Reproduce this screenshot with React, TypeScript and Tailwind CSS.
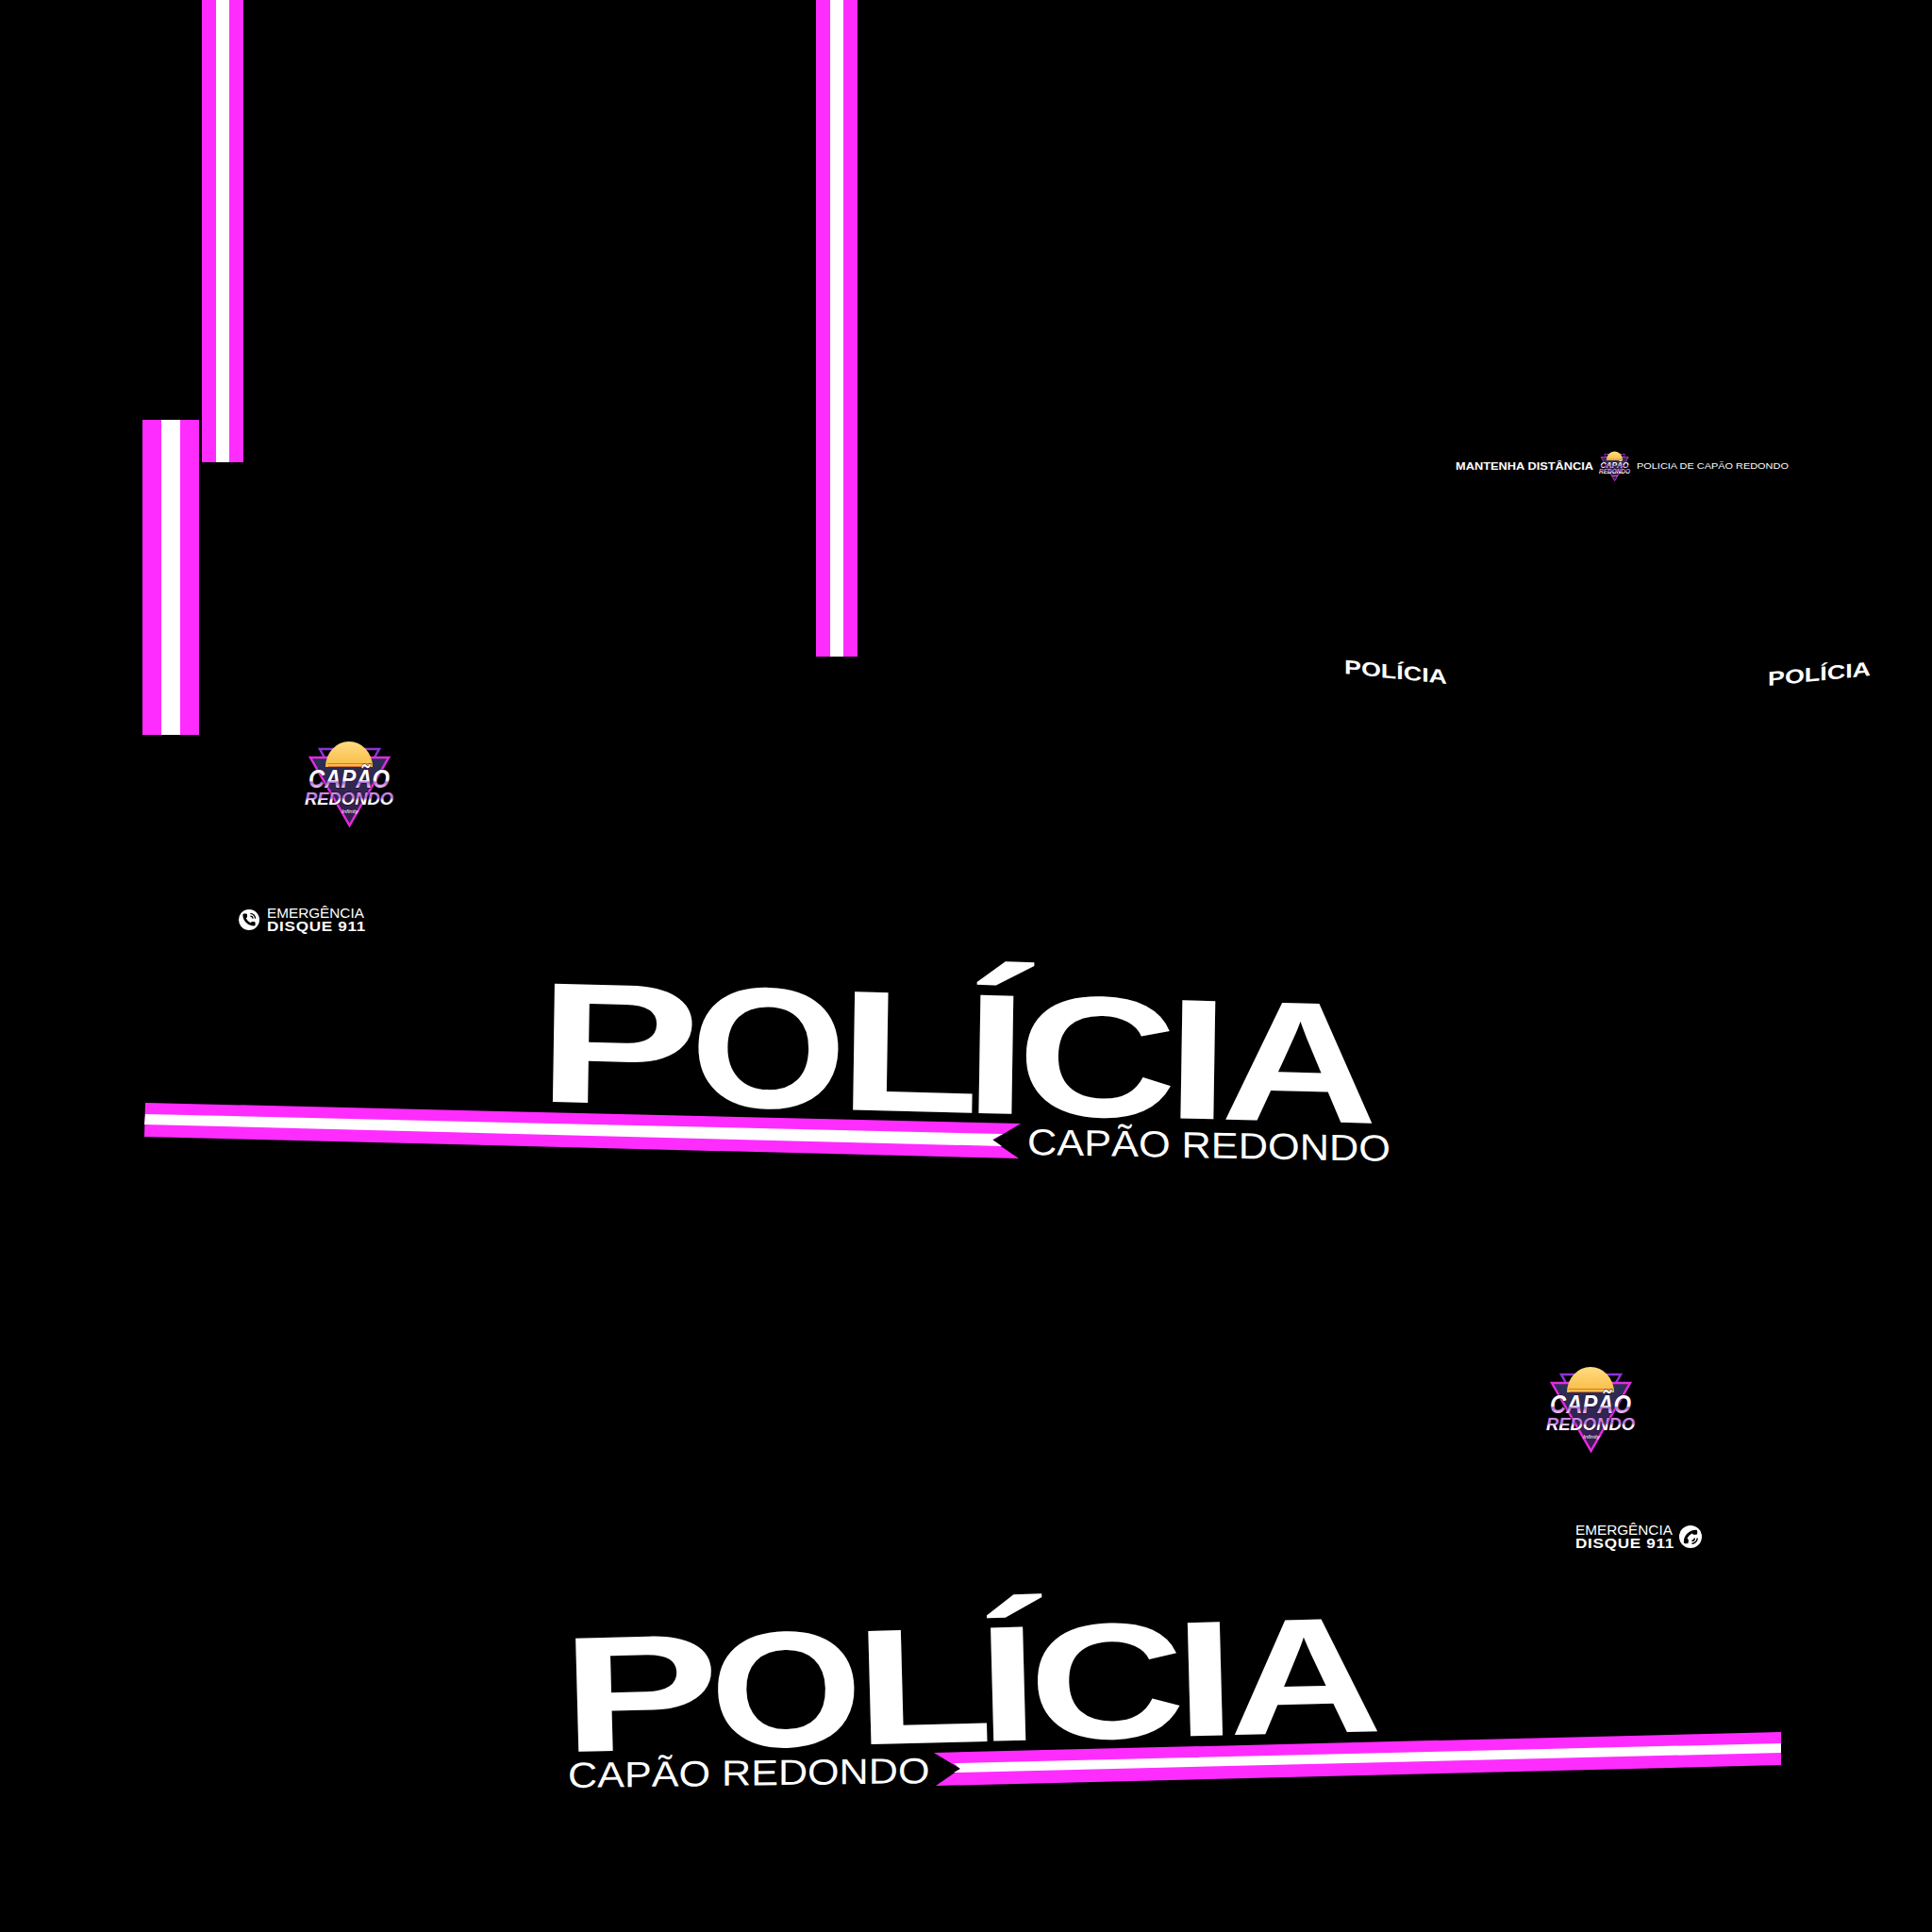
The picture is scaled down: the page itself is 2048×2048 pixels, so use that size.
import React from "react";

const Bar = ({ className, sideClass }: { className: string; sideClass: string }) => (
  <div className={`absolute flex ${className}`}>
    <div className={`h-full bg-[#ff2cff] ${sideClass}`} />
    <div className="h-full flex-1 bg-white" />
    <div className={`h-full bg-[#ff2cff] ${sideClass}`} />
  </div>
);

const Logo = ({ className, id }: { className: string; id: string }) => (
  <svg viewBox="0 0 140 120" className={className}>
    <defs>
      <linearGradient id={`${id}sun`} x1="0" y1="0" x2="0" y2="1">
        <stop offset="0" stopColor="#ffdc80" />
        <stop offset="1" stopColor="#f8bb45" />
      </linearGradient>
      <linearGradient id={`${id}tri`} x1="0" y1="0" x2="0" y2="1">
        <stop offset="0" stopColor="#2a2f55" />
        <stop offset="1" stopColor="#3a1a4c" />
      </linearGradient>
      <linearGradient id={`${id}txt`} x1="0" y1="0" x2="0" y2="1">
        <stop offset="0" stopColor="#ffffff" />
        <stop offset="0.55" stopColor="#ffffff" />
        <stop offset="0.62" stopColor="#a56ad0" />
        <stop offset="0.8" stopColor="#f6c4ef" />
        <stop offset="1" stopColor="#ffffff" />
      </linearGradient>
      <linearGradient id={`${id}txb`} x1="0" y1="0" x2="0" y2="1">
        <stop offset="0" stopColor="#e9a8f0" />
        <stop offset="0.45" stopColor="#b070d8" />
        <stop offset="0.6" stopColor="#ffffff" />
        <stop offset="1" stopColor="#ffffff" />
      </linearGradient>
    </defs>
    <polygon points="39,24 102,24 70,80" fill="none" stroke="#8a35d8" strokeWidth="2.5" />
    <polygon points="29,33 112,33 70.5,105" fill={`url(#${id}tri)`} stroke="#e22be0" strokeWidth="2.5" />
    <path d="M45 43 A25 27 0 0 1 95 43 Z" fill={`url(#${id}sun)`} />
    <rect x="47" y="39" width="46" height="1" fill="#d9752f" />
    <rect x="48" y="42" width="44" height="1" fill="#d9752f" />
    <g fontFamily="'Liberation Sans', sans-serif" fontWeight="700" fontStyle="italic" textAnchor="middle">
      <text x="70" y="65" fontSize="27" textLength="86" lengthAdjust="spacingAndGlyphs" fill={`url(#${id}txt)`} stroke="#12061c" strokeWidth="1" paintOrder="stroke">CAPÃO</text>
      <text x="70" y="83" fontSize="19" textLength="94" lengthAdjust="spacingAndGlyphs" fill={`url(#${id}txb)`} stroke="#22082c" strokeWidth="1" paintOrder="stroke">REDONDO</text>
      <text x="71" y="92" fontSize="6" fill="#ffffff" fontWeight="400">Infinity</text>
    </g>
  </svg>
);

const handset =
  "M13.832 16.568a1 1 0 0 0 1.213-.303l.355-.465A2 2 0 0 1 17 15h3a2 2 0 0 1 2 2v3a2 2 0 0 1-2 2A18 18 0 0 1 2 4a2 2 0 0 1 2-2h3a2 2 0 0 1 2 2v3a2 2 0 0 1-.8 1.6l-.468.351a1 1 0 0 0-.292 1.233 14 14 0 0 0 6.392 6.384";

const PhoneBadge = ({ className, mirrored }: { className: string; mirrored?: boolean }) => (
  <svg viewBox="0 0 24 24" className={className}>
    <circle cx="12" cy="12" r="12" fill="#fff" />
    <g transform={mirrored ? "translate(12 12) rotate(90) scale(.72) translate(-12 -12)" : "translate(12 12) scale(.72) translate(-12 -12)"}>
      <path d={handset} fill="#000" />
      <path d="M14 2a8 8 0 0 1 8 8M14 6a4 4 0 0 1 4 4" fill="none" stroke="#000" strokeWidth="2" />
    </g>
  </svg>
);

const wide = "font-['Liberation_Sans',sans-serif] text-white whitespace-nowrap leading-none";
const place = "absolute left-0 top-0 origin-top-left";

const letters: [string, string, string][] = [
  ["P", "w-[142px]", "[transform:translateX(-18.9px)_scaleX(1.42)]"],
  ["O", "w-[148px] ml-[10px]", "[transform:translateX(-8.9px)_scaleX(1.17)]"],
  ["L", "w-[122px] ml-[18px]", "[transform:translateX(-17.9px)_scaleX(1.35)]"],
  ["Í", "w-[35px] ml-[11px]", "[transform:translateX(-17.4px)_scaleX(1.33)]"],
  ["C", "w-[147px] ml-[15px]", "[transform:translateX(-11.3px)_scaleX(1.29)]"],
  ["I", "w-[34px] ml-[17px]", "[transform:translateX(-17.4px)_scaleX(1.33)]"],
  ["A", "w-[167px] ml-[7px]", "[transform:scaleX(1.27)]"],
];

const Title = ({ className }: { className: string }) => (
  <div className={`${place} ${wide} flex text-[182px] font-bold ${className}`}>
    {letters.map(([ch, box, glyph], i) => (
      <span key={i} className={`block ${box}`}>
        <span className={`block origin-left ${glyph}`}>{ch}</span>
      </span>
    ))}
  </div>
);

const Emergency = () => (
  <div className="flex flex-col w-[108px]">
    <span className={`${wide} block h-[14px] text-[14.5px] origin-left [transform:scaleX(1.055)]`}>EMERGÊNCIA</span>
    <span className={`${wide} block h-[14px] text-[14.5px] font-bold tracking-[0.6px] origin-left [transform:scaleX(1.18)]`}>DISQUE 911</span>
  </div>
);

export default function App() {
  return (
    <div className="relative w-[2048px] h-[2048px] bg-black overflow-hidden">
      <Bar className="left-[214px] top-0 w-[44px] h-[490px]" sideClass="w-[15px]" />
      <Bar className="left-[865px] top-0 w-[44px] h-[696px]" sideClass="w-[15px]" />
      <Bar className="left-[151px] top-[445px] w-[60px] h-[334px]" sideClass="w-[20px]" />

      <div className="absolute left-[1543px] top-[473px] h-[42px] flex items-center">
        <span className={`${wide} block w-[144px] text-[10.5px] font-bold origin-left [transform:scaleX(1.22)]`}>MANTENHA DISTÂNCIA</span>
        <Logo id="c" className="w-[49px] h-[42px]" />
        <span className={`${wide} block ml-[-1px] text-[9.5px] origin-left [transform:scaleX(1.15)]`}>POLICIA DE CAPÃO REDONDO</span>
      </div>

      <div className={`${place} ${wide} text-[21px] font-bold [transform:matrix(1.28,0.13,0,1,1425,696)]`}>POLÍCIA</div>
      <div className={`${place} ${wide} text-[21px] font-bold [transform:matrix(1.28,-0.13,0,1,1874,709)]`}>POLÍCIA</div>

      <Logo id="a" className="absolute left-[300px] top-[770px] w-[140px] h-[120px]" />
      <div className="absolute left-[253px] top-[961px] flex items-center gap-[8px]">
        <PhoneBadge className="w-[22px] h-[22px]" />
        <Emergency />
      </div>

      <Title className="[transform:matrix(1,0.0263,-0.016,1,590,1014)]" />
      <svg viewBox="0 0 2048 2048" className="absolute left-0 top-0 w-[2048px] h-[2048px] pointer-events-none">
        <polygon points="154,1169 1082,1191 1052,1209 1080,1228 153,1205" fill="#ff2cff" />
        <polygon points="154,1181 1063,1202 1052,1208 1062,1215 153,1192" fill="#fff" />
        <polygon points="990,1858 1888,1836 1888,1871 992,1893 1018,1875" fill="#ff2cff" />
        <polygon points="1011,1869 1888,1848 1888,1858 1011,1879 1018,1875" fill="#fff" />
      </svg>
      <div className={`${place} ${wide} text-[39px] [transform:matrix(1.11,0.02,0,1,1089,1191)]`}>CAPÃO REDONDO</div>

      <Logo id="b" className="absolute left-[1616px] top-[1433px] w-[140px] h-[120px]" />
      <div className="absolute left-[1670px] top-[1615px] flex items-center gap-[2px]">
        <Emergency />
        <PhoneBadge mirrored className="w-[24px] h-[24px]" />
      </div>

      <Title className="[transform:matrix(0.975,-0.0248,0.025,0.96,611,1709)]" />
      <div className={`${place} ${wide} text-[38px] [transform:matrix(1.135,-0.015,0,1,602,1863)]`}>CAPÃO REDONDO</div>
    </div>
  );
}
